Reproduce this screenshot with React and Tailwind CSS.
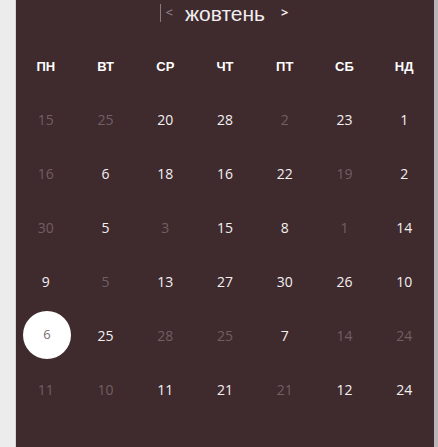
import React from 'react';

const days = ['ПН', 'ВТ', 'СР', 'ЧТ', 'ПТ', 'СБ', 'НД'];

// [value, dim, selected]
const rows = [
    [[15, 1], [25, 1], [20], [28], [2, 1], [23], [1]],
    [[16, 1], [6], [18], [16], [22], [19, 1], [2]],
    [[30, 1], [5], [3, 1], [15], [8], [1, 1], [14]],
    [[9], [5, 1], [13], [27], [30], [26], [10]],
    [[6, 0, 1], [25], [28, 1], [25, 1], [7], [14, 1], [24, 1]],
    [[11, 1], [10, 1], [11], [21], [21, 1], [12], [24]],
];

function App() {
    return (
        <div className="flex h-[447px] w-[438px] bg-[#ececec]" style={{ fontFamily: '"Open Sans", "Noto Sans", sans-serif' }}>
            <div className="w-[16px] border-r border-[#d4d4d4]"></div>
            <div className="flex-1 bg-[#3f2a2e] flex flex-col">
                <div className="flex items-center justify-center h-[26px] pr-[2px]">
                    <span className="w-px h-[18px] bg-[#8a7a7c] mr-[5px]"></span>
                    <span className="text-[#9a8e90] text-[13px] mr-[12px]">&lt;</span>
                    <span className="text-[#f2eeee] text-[21px] font-medium leading-none" style={{ fontFamily: '"Liberation Sans", sans-serif' }}>жовтень</span>
                    <span className="text-[#f2eeee] text-[13px] ml-[16px] font-bold">&gt;</span>
                </div>
                <div className="grid grid-cols-7 mt-[28px] h-[26px] items-center">
                    {days.map(d => (
                        <div key={d} className="text-center text-white text-[13px] font-bold" style={{ fontFamily: '"Liberation Sans", sans-serif' }}>{d}</div>
                    ))}
                </div>
                <div className="flex flex-col mt-[12px]">
                    {rows.map((row, i) => (
                        <div key={i} className="grid grid-cols-7 h-[54px] items-center">
                            {row.map(([v, dim, sel], j) => (
                                <div key={j} className="flex justify-center">
                                    {sel ? (
                                        <div className="w-[48px] h-[48px] ml-[2px] rounded-full bg-white flex items-center justify-center text-[#7a6e70] text-[13px]">{v}</div>
                                    ) : (
                                        <span className={`text-[14px] ${dim ? 'text-[#715f62]' : 'text-[#f4f0f0]'}`}>{v}</span>
                                    )}
                                </div>
                            ))}
                        </div>
                    ))}
                </div>
            </div>
            <div className="w-[4px] bg-[#b9b4b5]"></div>
        </div>
    );
}

export default App;
